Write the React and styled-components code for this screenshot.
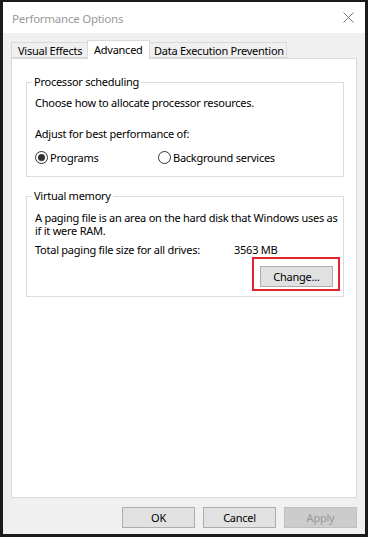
import React from 'react';
import styled, { createGlobalStyle } from 'styled-components';

const GlobalStyle = createGlobalStyle`
  html, body {
    margin: 0;
    padding: 0;
    background: #1b1b1b;
  }
  * {
    box-sizing: border-box;
  }
`;

const Window = styled.div`
  width: 368px;
  height: 537px;
  display: flex;
  flex-direction: column;
  border: 3px solid #1b1b1b;
  border-top-width: 2px;
  font-family: "Noto Sans", "Open Sans", sans-serif;
  font-size: 11px;
  letter-spacing: -0.25px;
  color: #000;
`;

const TitleBar = styled.div`
  height: 31px;
  flex: none;
  display: flex;
  align-items: center;
  justify-content: space-between;
  padding: 0 11px 0 9px;
  background: #fff;
`;

const Title = styled.span`
  color: #999;
  font-size: 11.5px;
  margin-top: 1px;
`;

const Body = styled.div`
  flex: 1;
  display: flex;
  flex-direction: column;
  padding: 7px 8px 6px 8px;
  background: #f0f0f0;
`;

const TabStrip = styled.div`
  height: 18px;
  display: flex;
  align-items: flex-end;
  position: relative;
  z-index: 1;
`;

const Tab = styled.div`
  width: ${(p) => p.$w}px;
  height: ${(p) => (p.$active ? 19 : 16)}px;
  margin-bottom: ${(p) => (p.$active ? -1 : 0)}px;
  margin-left: -1px;
  &:first-child { margin-left: 0; }
  display: flex;
  align-items: center;
  padding-left: ${(p) => p.$pad}px;
  padding-bottom: ${(p) => (p.$active ? 2 : 0)}px;
  padding-top: ${(p) => (p.$active ? 0 : 1)}px;
  border: 1px solid #d9d9d9;
  border-bottom: ${(p) => (p.$active ? 'none' : '1px solid #d9d9d9')};
  background: ${(p) => (p.$active ? '#fff' : '#f0f0f0')};
  white-space: nowrap;
  position: relative;
  z-index: ${(p) => (p.$active ? 2 : 1)};
`;

const Panel = styled.div`
  flex: 1;
  background: #fff;
  border: 1px solid #d9d9d9;
  padding: 16px 12px 0 14px;
  display: flex;
  flex-direction: column;
  gap: 12px;
`;

const Group = styled.fieldset`
  margin: 0;
  border: 1px solid #dcdcdc;
  padding: ${(p) => p.$pad};
  min-width: 0;
`;

const Legend = styled.legend`
  padding: 0 2px;
  margin-left: -3px;
  line-height: 14px;
`;

const Line = styled.div`
  line-height: ${(p) => p.$lh || 14}px;
  margin-top: ${(p) => p.$mt || 0}px;
  white-space: nowrap;
`;

const RadioRow = styled.div`
  display: flex;
  height: 14px;
  align-items: center;
  margin-top: 9px;
`;

const RadioOption = styled.label`
  width: ${(p) => p.$w || 'auto'};
  display: flex;
  align-items: center;
  gap: 2px;
  white-space: nowrap;
`;

const RadioCircle = styled.span`
  width: 13px;
  height: 13px;
  border-radius: 50%;
  border: 1px solid #333;
  background: #fff;
  display: flex;
  align-items: center;
  justify-content: center;
  flex: none;
  &::after {
    content: '';
    width: 7px;
    height: 7px;
    border-radius: 50%;
    background: ${(p) => (p.$checked ? '#333' : 'transparent')};
  }
`;

const SizeRow = styled.div`
  display: flex;
  line-height: 14px;
  margin-top: 6px;
`;

const SizeLabel = styled.span`
  width: 199px;
  white-space: nowrap;
`;

const ActionRow = styled.div`
  display: flex;
  justify-content: flex-end;
`;

const Highlight = styled.div`
  border: 2px solid #e3242b;
  padding: 7px 5px 2px 6px;
`;

const Button = styled.button`
  width: ${(p) => p.$w || 73}px;
  height: 21px;
  padding: 0;
  font-family: inherit;
  font-size: 11px;
  letter-spacing: -0.25px;
  color: ${(p) => (p.disabled ? '#999' : '#000')};
  background: ${(p) => (p.disabled ? '#cccccc' : '#e1e1e1')};
  border: 1px solid ${(p) => (p.disabled ? '#bfbfbf' : '#adadad')};
  border-radius: 0;
`;

const Footer = styled.div`
  display: flex;
  justify-content: flex-end;
  gap: 8px;
  margin-top: 9px;
`;

const CloseIcon = () => (
  <svg width="11" height="11" viewBox="0 0 11 11">
    <path d="M0.5 0.5 L10.5 10.5 M10.5 0.5 L0.5 10.5" stroke="#7a7a7a" strokeWidth="1" fill="none" />
  </svg>
);

export default function App() {
  return (
    <>
      <GlobalStyle />
      <Window>
        <TitleBar>
          <Title>Performance Options</Title>
          <CloseIcon />
        </TitleBar>
        <Body>
          <TabStrip>
            <Tab $w={77} $pad={6}>Visual Effects</Tab>
            <Tab $w={63} $pad={6} $active>Advanced</Tab>
            <Tab $w={138} $pad={4}>Data Execution Prevention</Tab>
          </TabStrip>
          <Panel>
            <Group $pad="7px 8px 12px 8px">
              <Legend>Processor scheduling</Legend>
              <Line>Choose how to allocate processor resources.</Line>
              <Line $mt={17}>Adjust for best performance of:</Line>
              <RadioRow>
                <RadioOption $w="123px">
                  <RadioCircle $checked />
                  Programs
                </RadioOption>
                <RadioOption>
                  <RadioCircle />
                  Background services
                </RadioOption>
              </RadioRow>
            </Group>
            <Group $pad="8px 3px 5px 8px">
              <Legend>Virtual memory</Legend>
              <Line $lh={13}>
                A paging file is an area on the hard disk that Windows uses as
                <br />
                if it were RAM.
              </Line>
              <SizeRow>
                <SizeLabel>Total paging file size for all drives:</SizeLabel>
                <span>3563 MB</span>
              </SizeRow>
              <ActionRow>
                <Highlight>
                  <Button>Change...</Button>
                </Highlight>
              </ActionRow>
            </Group>
          </Panel>
          <Footer>
            <Button>OK</Button>
            <Button>Cancel</Button>
            <Button disabled>Apply</Button>
          </Footer>
        </Body>
      </Window>
    </>
  );
}
